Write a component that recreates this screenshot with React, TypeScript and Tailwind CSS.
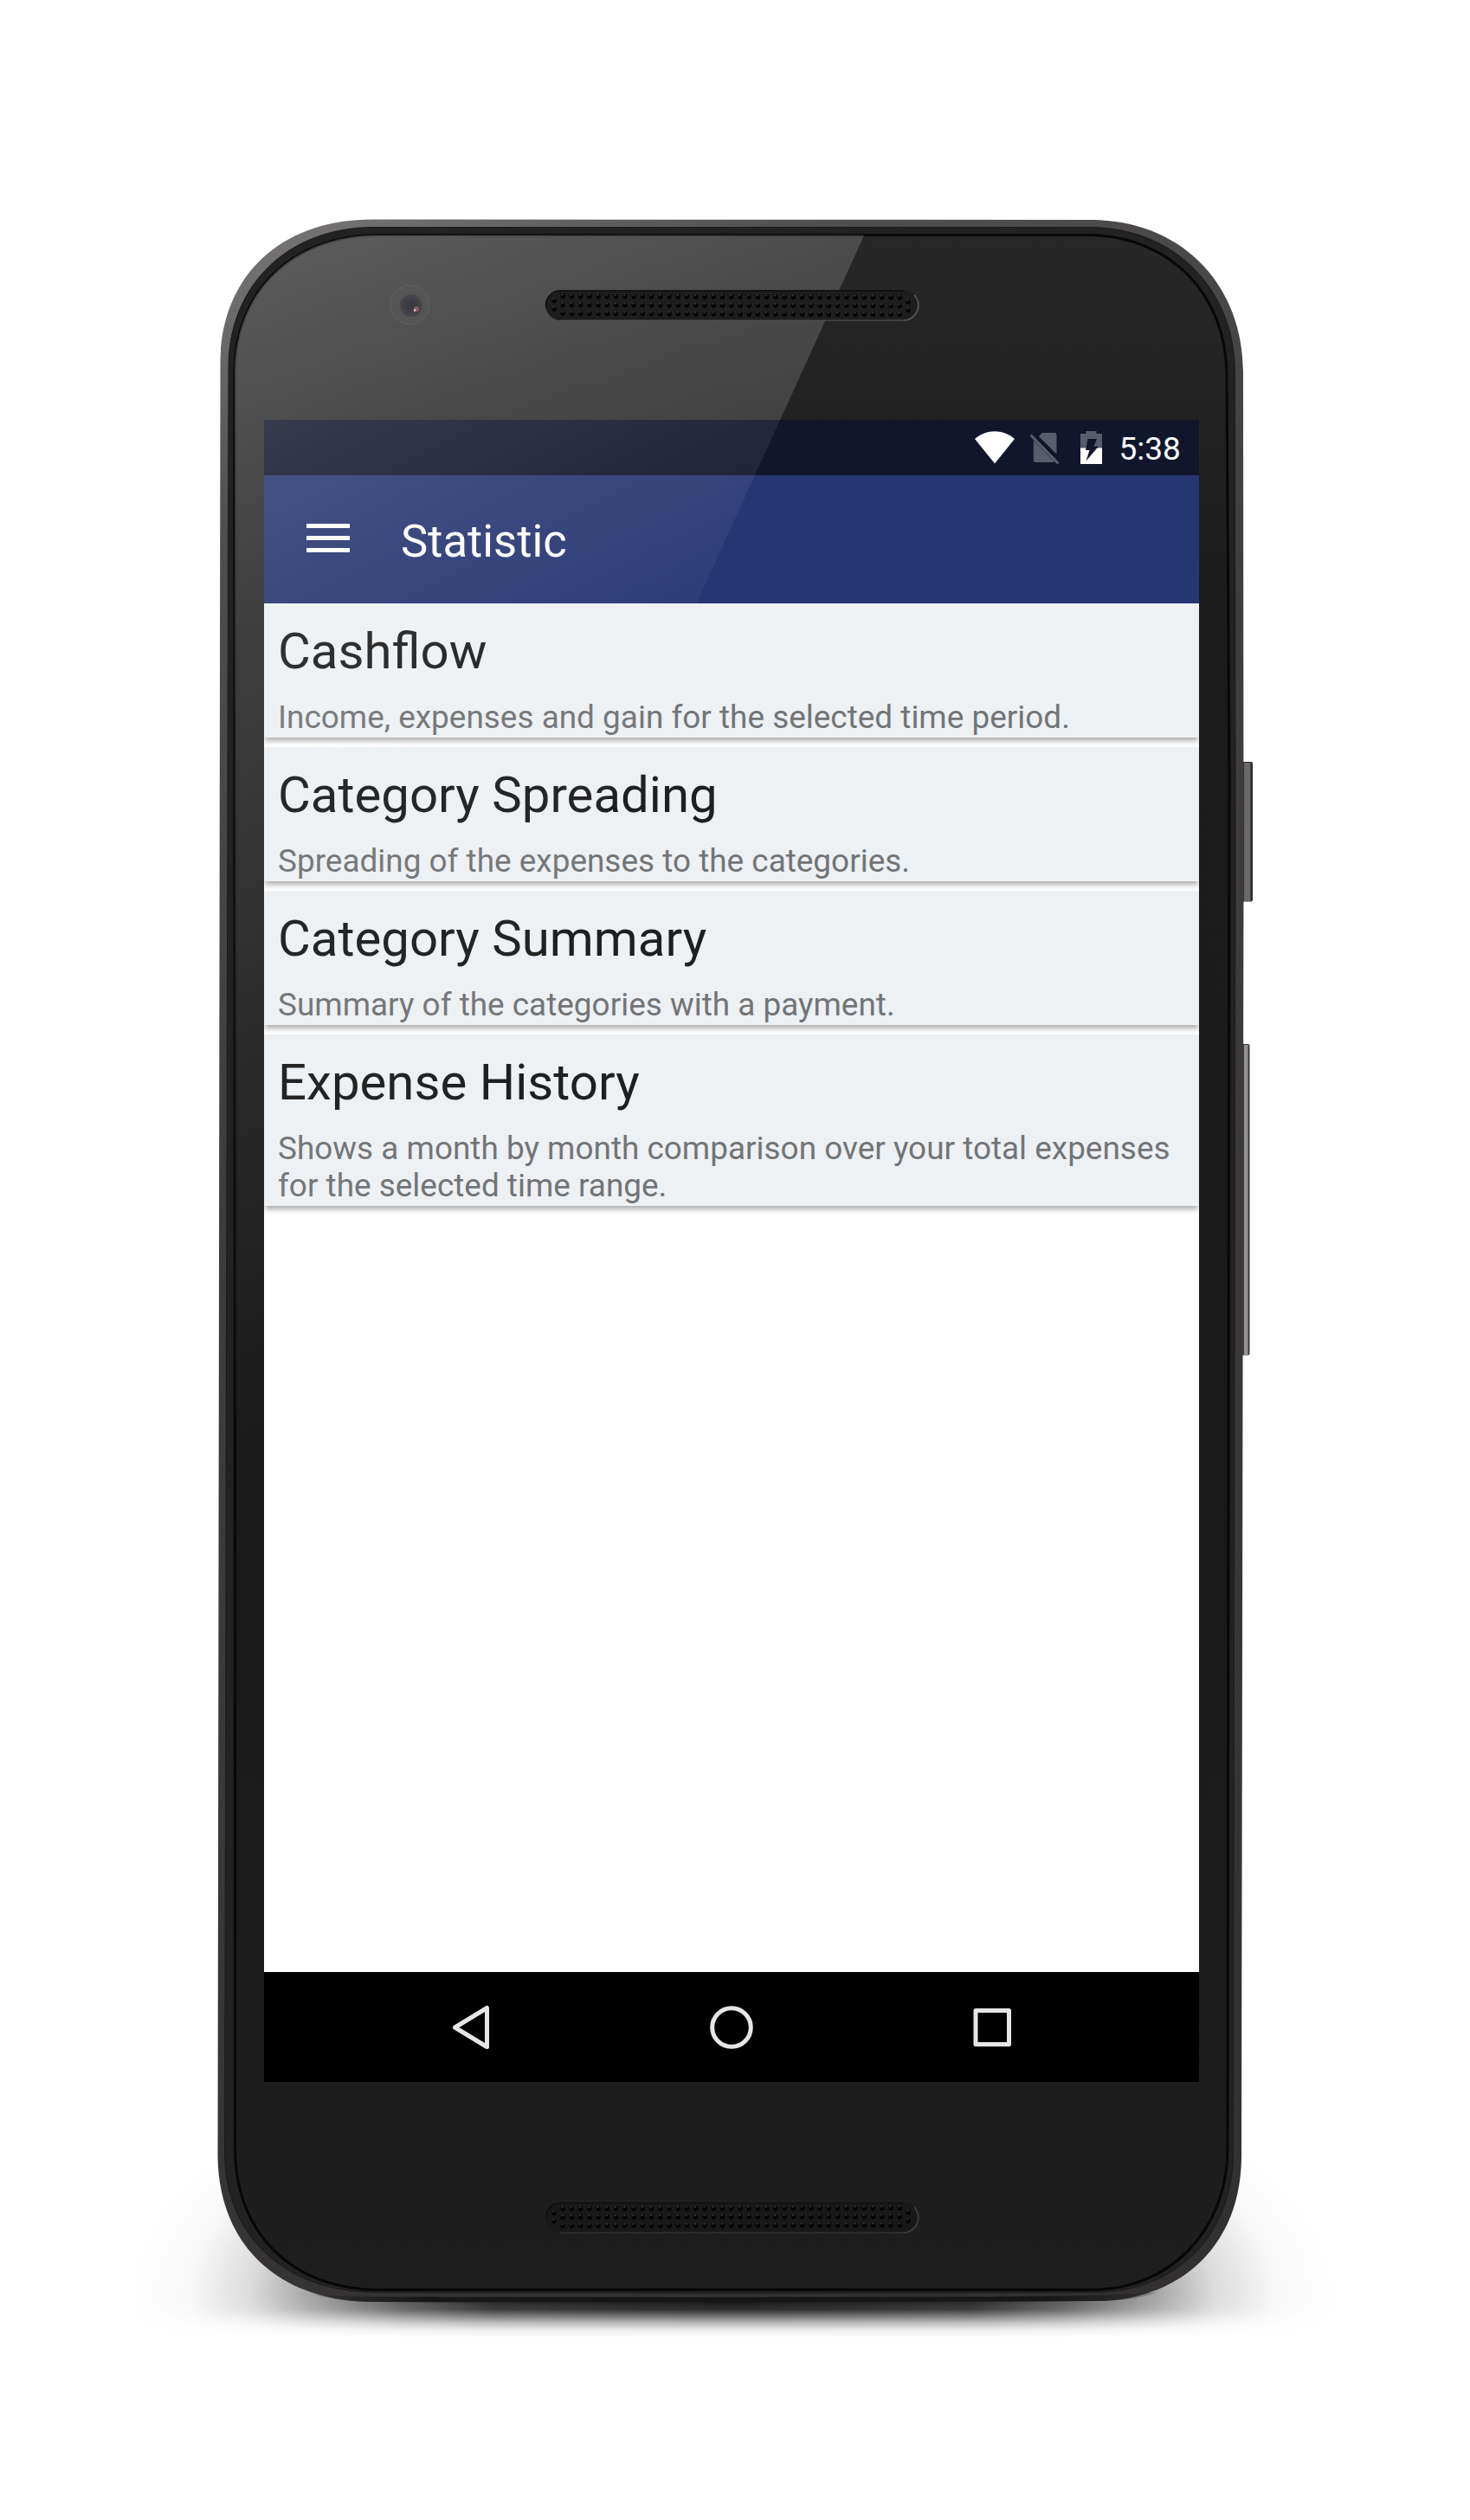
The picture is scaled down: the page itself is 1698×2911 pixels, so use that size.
const statistics = [
  { title: "Cashflow", text: "Income, expenses and gain for the selected time period." },
  { title: "Category Spreading", text: "Spreading of the expenses to the categories." },
  { title: "Category Summary", text: "Summary of the categories with a payment." },
  { title: "Expense History", text: "Shows a month by month comparison over your total expenses for the selected time range." },
];

const BODY =
  "M254.5 420 C254.500 320 323 253.5 430 253.5 L1260 254 C1364 254 1436 328 1436 430 L1436.5 1000 L1434 2490 C1434 2594 1364 2656 1270 2658 L850 2660 L430 2659 C316 2658 252 2588 251.5 2490 Z";
const RIM =
  "M264 424 C264 332 330 262.5 432 262.5 L1258 262.5 C1358 262.5 1426.5 336 1426.5 430 L1427 1000 L1424.5 2486 C1424 2584 1358 2647 1266 2648 L850 2649 L432 2648 C328 2647 260 2582 259.5 2488 Z";
const GLASS =
  "M271 428 C272 338 336 272 436 271.5 L1256 271.5 C1352 272 1416 340 1417 432 L1420 900 L1418 2484 C1417 2578 1350 2644 1264 2645 L434 2645 C336 2644 272 2578 271.5 2484 Z";

/** Perforated grille used for the earpiece and the loudspeaker. */
function Grille({ y, tilt, fill, edge }: { y: number; tilt: number; fill: string; edge: string }) {
  const end = 38 * tilt;
  const holes: [number, number][] = [[640, 12.5], [640, 22], [1049, 12.5 + end], [1049, 22.3 + end]];
  for (let i = 0; i < 39; i++) {
    const x = 650.2 + i * 10.24;
    const drift = i * tilt;
    holes.push([x, 7.6 + drift], [x, 17.4 + drift], [x, 27.3 + drift]);
  }
  return (
    <g transform={`translate(0 ${y})`}>
      <rect x="630" y="0" width="431" height="35" rx="17.5" fill={fill} />
      <path d="M630.800 20 A17 17 0 0 1 647.500 0.800 H1044" fill="none" stroke="#0f0f0f" strokeWidth="1.600" />
      <path d="M647 35.200 H1043.500" fill="none" stroke={edge} strokeWidth="1.200" opacity=".8" />
      <path d="M1043.500 35.200 A17.600 17.600 0 0 0 1056 5.500" fill="none" stroke={edge} strokeWidth="1.800" />
      {holes.map(([cx, cy], i) => (
        <g key={i}>
          <circle cx={cx} cy={cy} r="2.700" fill="#050505" />
          <circle cx={cx - 0.6} cy={cy - 2} r="0.900" fill="#454545" />
        </g>
      ))}
    </g>
  );
}

function PhoneBody() {
  return (
    <svg className="absolute inset-0" width="1698" height="2911" viewBox="0 0 1698 2911" aria-hidden="true">
      <defs>
        <radialGradient id="ground" cx="0" cy="0" r="1" gradientUnits="userSpaceOnUse" gradientTransform="translate(846 2655) scale(695 310)">
          <stop offset="0" stopOpacity=".95" />
          <stop offset=".4" stopOpacity=".87" />
          <stop offset=".55" stopOpacity=".66" />
          <stop offset=".7" stopOpacity=".36" />
          <stop offset=".8" stopOpacity=".14" />
          <stop offset=".9" stopOpacity=".03" />
          <stop offset="1" stopOpacity="0" />
        </radialGradient>
        <linearGradient id="floor" x1="0" y1="2650" x2="0" y2="2700" gradientUnits="userSpaceOnUse">
          <stop offset="0" stopColor="#fff" />
          <stop offset=".22" stopColor="#eee" />
          <stop offset=".36" stopColor="#ddd" />
          <stop offset=".5" stopColor="#9c9c9c" />
          <stop offset=".66" stopColor="#505050" />
          <stop offset=".82" stopColor="#181818" />
          <stop offset="1" stopColor="#000" />
        </linearGradient>
        <mask id="floorMask" maskUnits="userSpaceOnUse" x="0" y="2200" width="1698" height="711">
          <rect x="0" y="2200" width="1698" height="711" fill="url(#floor)" />
        </mask>
        <linearGradient id="rimShade" x1="254" y1="254" x2="1436" y2="2659" gradientUnits="userSpaceOnUse">
          <stop offset="0" stopColor="#7a7878" />
          <stop offset=".12" stopColor="#4f4d4d" />
          <stop offset=".35" stopColor="#3f3d3d" />
          <stop offset="1" stopColor="#322f30" />
        </linearGradient>
        <linearGradient id="lowerEdge" x1="340" y1="0" x2="1360" y2="0" gradientUnits="userSpaceOnUse">
          <stop offset="0" stopColor="#171616" stopOpacity="0" />
          <stop offset=".15" stopColor="#171616" />
          <stop offset=".85" stopColor="#171616" />
          <stop offset="1" stopColor="#171616" stopOpacity="0" />
        </linearGradient>
        <linearGradient id="glassShade" x1="0" y1="272" x2="0" y2="2645" gradientUnits="userSpaceOnUse">
          <stop offset="0" stopColor="#272727" />
          <stop offset=".2" stopColor="#1b1b1b" />
          <stop offset=".7" stopColor="#1a1a1a" />
          <stop offset="1" stopColor="#1e1e1e" />
        </linearGradient>
        <linearGradient id="bezelGlare" x1="271" y1="272" x2="831" y2="1392" gradientUnits="userSpaceOnUse">
          <stop offset="0" stopColor="#fff" stopOpacity=".25" />
          <stop offset=".28" stopColor="#fff" stopOpacity=".165" />
          <stop offset=".45" stopColor="#fff" stopOpacity=".13" />
          <stop offset=".65" stopColor="#fff" stopOpacity=".075" />
          <stop offset="1" stopColor="#fff" stopOpacity="0" />
        </linearGradient>
        <radialGradient id="lens" cx=".5" cy=".5" r=".5">
          <stop offset="0" stopColor="#38363f" />
          <stop offset=".7" stopColor="#423f47" />
          <stop offset="1" stopColor="#4b484b" />
        </radialGradient>
        <clipPath id="glassClip"><path d={GLASS} /></clipPath>
      </defs>

      <g mask="url(#floorMask)">
        <ellipse cx="846" cy="2655" rx="695" ry="310" fill="url(#ground)" />
      </g>

      <rect x="1434" y="880" width="13" height="161.500" rx="2" fill="#2b2929" />
      <rect x="1437" y="881" width="7.500" height="160" fill="#6b686a" />
      <rect x="1434" y="1206" width="9.500" height="359.500" rx="2" fill="#3b3939" />
      <rect x="1437" y="1207" width="4.500" height="358" fill="#949293" />

      <path d={BODY} fill="url(#rimShade)" />
      <path d="M360 2650 C400 2654 450 2653.500 850 2653.500 C1250 2653.500 1300 2652 1340 2647 C1315 2656 1290 2657.500 1270 2658 L850 2660 L430 2659 C405 2659 385 2656 360 2650 Z" fill="url(#lowerEdge)" />
      <path d={RIM} fill="#232222" stroke="#1c1b1b" strokeWidth="1" />
      <path d={GLASS} fill="url(#glassShade)" stroke="#070707" strokeWidth="3" />
      <g clipPath="url(#glassClip)">
        <path d="M260 260 H1003.500 L265 1884 Z" fill="url(#bezelGlare)" />
      </g>

      <circle cx="473.500" cy="352" r="22.500" fill="#585858" stroke="#6c6c6c" strokeWidth="1" opacity=".55" />
      <circle cx="475" cy="353" r="13" fill="url(#lens)" />
      <circle cx="481" cy="357" r="3" fill="#a06a62" opacity=".75" />
      <circle cx="479" cy="358.500" r="1.300" fill="#f0c8c0" />

      <Grille y={335} tilt={0.03} fill="#1d1d1d" edge="#565656" />
      <Grille y={2544} tilt={-0.02} fill="#181818" edge="#3c3e3f" />
    </svg>
  );
}

/** Diagonal reflection that crosses the upper left part of the display. */
function ScreenGlare() {
  return (
    <svg className="pointer-events-none absolute inset-0" width="1080" height="1920" viewBox="305 485 1080 1920" aria-hidden="true">
      <defs>
        <linearGradient id="screenGlare" x1="271" y1="272" x2="831" y2="1392" gradientUnits="userSpaceOnUse">
          <stop offset=".15" stopColor="#fff" stopOpacity=".16" />
          <stop offset=".32" stopColor="#fff" stopOpacity=".095" />
          <stop offset=".49" stopColor="#fff" stopOpacity=".037" />
          <stop offset="1" stopColor="#fff" stopOpacity="0" />
        </linearGradient>
      </defs>
      <path d="M305 485 H901 L305 1796 Z" fill="url(#screenGlare)" />
    </svg>
  );
}

function StatusBar() {
  return (
    <div className="flex h-16 shrink-0 items-start bg-[#11162d] pl-[821px]">
      <svg className="mt-[13px]" width="46" height="38" viewBox="0 0 46 38">
        <path d="M0 9 C13 -2.700 33 -2.700 46 9 L23 37.500 Z" fill="#fff" />
      </svg>
      <svg className="mt-[13px] ml-[17px]" width="36" height="39" viewBox="0 0 36 39" fill="#585d6d">
        <path d="M10.800 6 L15 2 H29 a2.500 2.500 0 0 1 2.500 2.500 V26.500 Z" />
        <path d="M4.800 10.500 L29 35.200 Q28.300 36 27 36 H7.500 a2.700 2.700 0 0 1-2.700-2.700 Z" />
        <path d="M1.500 4.500 L33.500 37.500" stroke="#585d6d" strokeWidth="3" />
      </svg>
      <svg className="mt-[13px] ml-[23px]" width="25" height="38" viewBox="0 0 25 38">
        <path d="M6.500 0 H18.500 V3 H25 V20 H0 V3 H6.500 Z" fill="#585d6d" />
        <path d="M0 19.500 H25 V38 H0 Z" fill="#fff" />
        <path d="M8.500 9 H19 L15.500 17.500 H21 L6.500 34.500 L10.500 22 H6 Z" fill="#11162d" />
      </svg>
      <span className="mt-[12px] ml-[19.500px] text-[37px] leading-[43px] text-white">5:38</span>
    </div>
  );
}

function AppBar() {
  return (
    <header className="flex h-[148px] shrink-0 items-center bg-[#263671] pl-[49px]">
      <div className="-mt-[3px] flex w-[50px] flex-col gap-[9px]">
        <span className="h-[5px] bg-white" />
        <span className="h-[5px] bg-white" />
        <span className="h-[5px] bg-white" />
      </div>
      <h1 className="mt-1 ml-[59px] text-[52.600px] leading-[62px] text-white">Statistic</h1>
    </header>
  );
}

function NavBar() {
  return (
    <nav className="flex h-[127px] shrink-0 items-center justify-between bg-black px-[214px]">
      <svg width="50" height="54" viewBox="0 0 50 54" fill="none" stroke="#e6e6e6" strokeWidth="5" strokeLinejoin="round">
        <path d="M43.500 4.500 V49.500 L6.500 27 Z" />
      </svg>
      <svg width="54" height="54" viewBox="0 0 54 54" fill="none" stroke="#e6e6e6" strokeWidth="5">
        <circle cx="27" cy="27" r="22.300" />
      </svg>
      <svg width="50" height="54" viewBox="0 0 50 54" fill="none" stroke="#e6e6e6" strokeWidth="5" strokeLinejoin="round">
        <rect x="6" y="7.500" width="38.500" height="39" />
      </svg>
    </nav>
  );
}

export default function App() {
  return (
    <div className="relative h-[2911px] w-[1698px] overflow-hidden bg-white pt-[485px] pl-[305px] font-['Roboto',sans-serif]">
      <PhoneBody />
      <div className="relative flex h-[1920px] w-[1080px] flex-col overflow-hidden bg-white">
        <StatusBar />
        <AppBar />
        <main className="flex flex-1 flex-col gap-[11px] bg-white">
          {statistics.map((item) => (
            <section
              key={item.title}
              className="bg-[#edf1f4] px-4 pt-[21px] pb-[2px] shadow-[0_5px_6px_-1px_rgba(0,0,0,0.32)]"
            >
              <h2 className="text-[58.150px] leading-[68px] text-[#1f1f1f]">{item.title}</h2>
              <p className="mt-[21px] text-[36.930px] leading-[43px] text-[#727476]">{item.text}</p>
            </section>
          ))}
        </main>
        <NavBar />
        <ScreenGlare />
      </div>
    </div>
  );
}
